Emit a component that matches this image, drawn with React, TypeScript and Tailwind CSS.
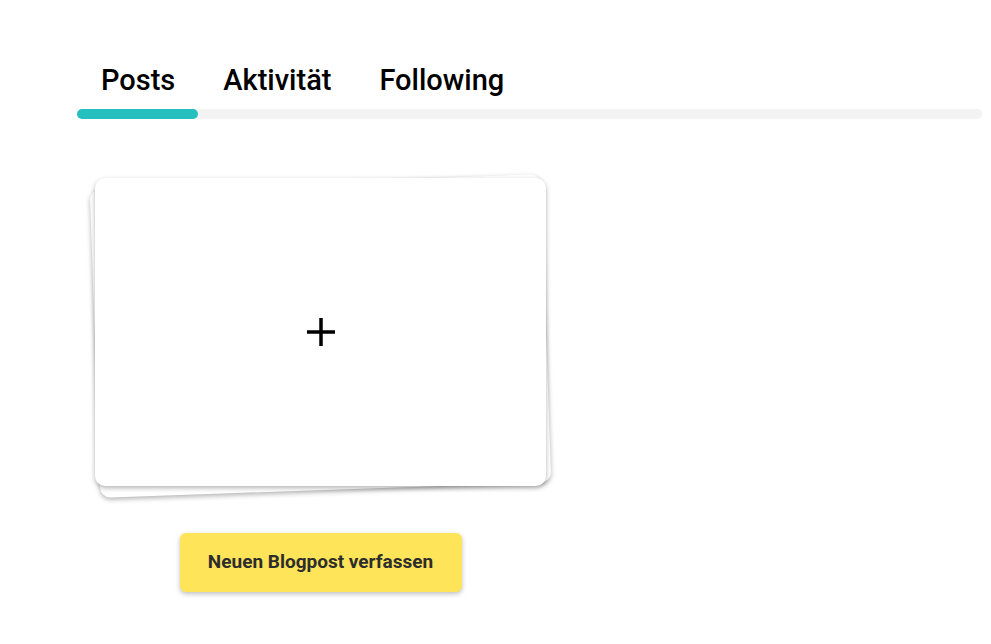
import React from "react";

export default function App() {
  const tabs = ["Posts", "Aktivität", "Following"];
  return (
    <div className="min-h-[644px] w-[991px] bg-white pl-[77px] pr-[9px] pt-[60px]" style={{ fontFamily: "Roboto, 'Noto Sans', sans-serif" }}>
      <div className="flex flex-col">
        <div className="flex">
          {tabs.map((t) => (
            <div key={t} className="px-6 text-[29px] font-medium leading-[40px] text-black">
              {t}
            </div>
          ))}
        </div>
        <div className="mt-[9px] h-[10px] w-full rounded-full bg-[#f3f3f3]">
          <div className="h-[10px] w-[121px] rounded-full bg-[#26bfbf]" />
        </div>
      </div>
      <div className="ml-[18px] mt-[59px] flex w-[451px] flex-col items-center">
        <div className="relative h-[308px] w-[451px]">
          <div className="absolute inset-0 translate-y-[4px] -rotate-2 rounded-[10px] bg-white shadow-[0_2px_5px_rgba(0,0,0,0.3)]" />
          <div className="absolute inset-0 flex items-center justify-center rounded-[10px] bg-white shadow-[0_2px_5px_rgba(0,0,0,0.3)]">
            <svg width="30" height="30" viewBox="0 0 30 30">
              <path d="M15 1 V29 M1 15 H29" stroke="#000" strokeWidth="3.5" fill="none" />
            </svg>
          </div>
        </div>
        <button className="mt-[47px] h-[59px] w-[282px] rounded-[6px] bg-[#fde459] text-[19px] font-bold text-[#2d2d2d] shadow-[0_2px_5px_rgba(0,0,0,0.25)]">
          Neuen Blogpost verfassen
        </button>
      </div>
    </div>
  );
}
